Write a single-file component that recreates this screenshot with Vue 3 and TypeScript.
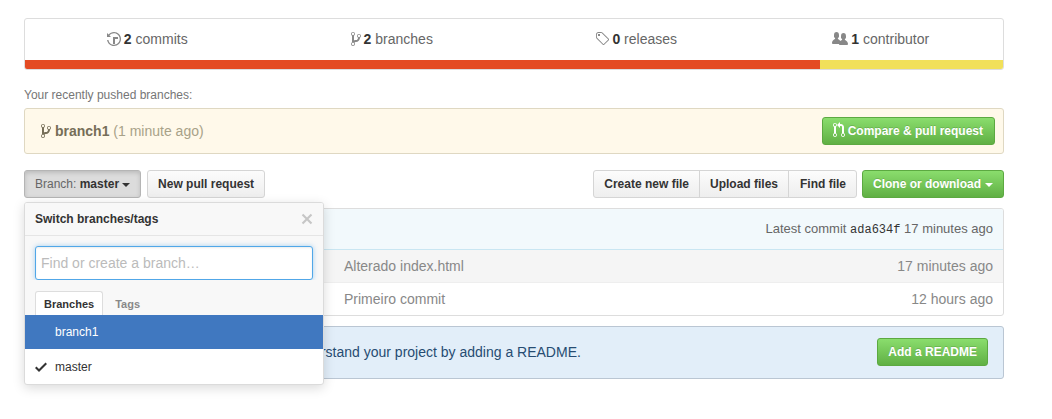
<script setup lang="ts">
const stats = [
  { icon: "history", w: 14, num: "2", label: "commits" },
  { icon: "branch", w: 10, num: "2", label: "branches" },
  { icon: "tag", w: 14, num: "0", label: "releases" },
  { icon: "org", w: 16, num: "1", label: "contributor" },
];

const paths: Record<string, string> = {
  history:
    "M8 13H6V6h5v2H8v5zM7 1C4.81 1 2.87 2.02 1.59 3.59L0 2v4h4L2.5 4.5C3.55 3.17 5.17 2.3 7 2.3c3.14 0 5.7 2.56 5.7 5.7s-2.56 5.7-5.7 5.7A5.71 5.71 0 0 1 1.4 9H.08c.48 3.4 3.42 6 6.92 6 3.86 0 7-3.14 7-7s-3.14-7-7-7z",
  branch:
    "M10 5c0-1.11-.89-2-2-2a1.993 1.993 0 0 0-1 3.72v.3c-.02.52-.23.98-.63 1.38-.4.4-.86.61-1.38.63-.83.02-1.48.16-2 .45V4.72a1.993 1.993 0 0 0-1-3.72C.88 1 0 1.89 0 3a2 2 0 0 0 1 1.72v6.56c-.59.35-1 .99-1 1.72 0 1.11.89 2 2 2 1.11 0 2-.89 2-2 0-.53-.2-1-.53-1.36.09-.06.48-.41.59-.47.25-.11.56-.17.94-.17 1.05-.05 1.95-.45 2.75-1.25S8.95 7.77 9 6.73h-.02C9.59 6.37 10 5.73 10 5zM2 1.8c.66 0 1.2.55 1.2 1.2 0 .65-.55 1.2-1.2 1.2C1.35 4.2.8 3.65.8 3c0-.65.55-1.2 1.2-1.2zm0 12.41c-.66 0-1.2-.55-1.2-1.2 0-.65.55-1.2 1.2-1.2.65 0 1.2.55 1.2 1.2 0 .65-.55 1.2-1.2 1.2zm6-8c-.66 0-1.2-.55-1.2-1.2 0-.65.55-1.2 1.2-1.2.65 0 1.2.55 1.2 1.2 0 .65-.55 1.2-1.2 1.2z",
  tag:
    "M7.73 1.73C7.26 1.26 6.62 1 5.96 1H3.5C2.13 1 1 2.13 1 3.5v2.47c0 .66.27 1.3.73 1.77l6.06 6.06c.39.39 1.02.39 1.41 0l4.59-4.59a.996.996 0 0 0 0-1.41L7.73 1.73zM2.38 7.09c-.31-.3-.47-.7-.47-1.13V3.5c0-.88.72-1.59 1.59-1.59h2.47c.42 0 .83.16 1.13.47l6.14 6.13-4.73 4.73-6.13-6.15zM3.01 3h2v2H3V3h.01z",
  org:
    "M16 12.999c0 .439-.45 1-1 1H7.995c-.539 0-.994-.447-.995-.999H1c-.54 0-1-.561-1-1 0-2.634 3-4 3-4s.229-.409 0-1c-.841-.621-1.058-.59-1-3 .058-2.419 1.367-3 2.5-3s2.442.58 2.5 3c.058 2.41-.159 2.379-1 3-.229.59 0 1 0 1s1.549.711 2.42 2.088C9.196 9.369 10 8.999 10 8.999s.229-.409 0-1c-.841-.62-1.058-.59-1-3 .058-2.419 1.367-3 2.5-3s2.437.581 2.495 3c.059 2.41-.158 2.38-1 3-.229.59 0 1 0 1s3.005 1.366 3.005 4",
  pull:
    "M11 11.28V5c-.03-.78-.34-1.47-.94-2.06C9.46 2.35 8.78 2.03 8 2H7V0L4 3l3 3V4h1c.27.02.48.11.69.31.21.2.3.42.31.69v6.28A1.993 1.993 0 0 0 10 15a1.993 1.993 0 0 0 1-3.72zm-1 2.92c-.66 0-1.2-.55-1.2-1.2 0-.65.55-1.2 1.2-1.2.65 0 1.2.55 1.2 1.2 0 .65-.55 1.2-1.2 1.2zM4 3c0-1.11-.89-2-2-2a1.993 1.993 0 0 0-1 3.72v6.56A1.993 1.993 0 0 0 2 15a1.993 1.993 0 0 0 1-3.72V4.72c.59-.34 1-.98 1-1.72zm-.8 10c0 .66-.55 1.2-1.2 1.2-.65 0-1.2-.55-1.2-1.2 0-.65.55-1.2 1.2-1.2.65 0 1.2.55 1.2 1.2zM2 4.2C1.34 4.2.8 3.65.8 3c0-.65.55-1.2 1.2-1.2.65 0 1.2.55 1.2 1.2 0 .65-.55 1.2-1.2 1.2z",
  check: "M12 5l-8 8-4-4 1.5-1.5L4 10l6.5-6.5L12 5z",
  x: "M7.48 8l3.75 3.75-1.48 1.48L6 9.48l-3.75 3.75-1.48-1.48L4.52 8 .77 4.25l1.48-1.48L6 6.52l3.75-3.75 1.48 1.48L7.48 8z",
};

const rows = [
  { message: "Alterado index.html", age: "17 minutes ago" },
  { message: "Primeiro commit", age: "12 hours ago" },
];
</script>

<template>
  <div class="page">
    <section class="summary">
      <ul class="stats">
        <li v-for="s in stats" :key="s.label">
          <svg class="icon" :width="s.w" height="16" :viewBox="`0 0 ${s.w} 16`">
            <path :d="paths[s.icon]" />
          </svg>
          <b>{{ s.num }}</b> {{ s.label }}
        </li>
      </ul>
      <div class="lang-bar">
        <span class="lang-html" />
        <span class="lang-js" />
      </div>
    </section>

    <h3 class="recent-title">Your recently pushed branches:</h3>
    <div class="recent">
      <div class="recent-name">
        <svg class="icon" width="10" height="16" viewBox="0 0 10 16">
          <path :d="paths.branch" />
        </svg>
        <b>branch1</b> <span class="recent-age">(1 minute ago)</span>
      </div>
      <a class="btn primary compare">
        <svg class="icon" width="12" height="16" viewBox="0 0 12 16">
          <path :d="paths.pull" />
        </svg>
        Compare &amp; pull request
      </a>
    </div>

    <div class="toolbar">
      <div class="branch-select">
        <a class="btn pressed"><span class="muted">Branch:</span> master<i class="caret" /></a>
        <div class="menu">
          <header class="menu-head">
            <span>Switch branches/tags</span>
            <svg class="close" width="12" height="16" viewBox="0 0 12 16">
              <path :d="paths.x" />
            </svg>
          </header>
          <div class="menu-filter">
            <input class="filter-input" type="text" placeholder="Find or create a branch…" />
          </div>
          <div class="menu-tabs">
            <span class="tab active">Branches</span>
            <span class="tab">Tags</span>
          </div>
          <div class="menu-item selected"><span class="check-slot" />branch1</div>
          <div class="menu-item">
            <span class="check-slot">
              <svg width="12" height="16" viewBox="0 0 12 16"><path :d="paths.check" /></svg>
            </span>
            master
          </div>
        </div>
      </div>
      <a class="btn">New pull request</a>
      <div class="spacer" />
      <div class="group">
        <a class="btn">Create new file</a>
        <a class="btn">Upload files</a>
        <a class="btn">Find file</a>
      </div>
      <a class="btn primary">Clone or download<i class="caret" /></a>
    </div>

    <div class="files">
      <div class="tease">
        Latest commit <code>ada634f</code> 17 minutes ago
      </div>
      <div v-for="(r, i) in rows" :key="r.message" class="row" :class="{ shaded: i === 0 }">
        <span class="row-msg">{{ r.message }}</span>
        <span class="row-age">{{ r.age }}</span>
      </div>
    </div>

    <div class="readme">
      <span>Help people interested in this repository understand your project by adding a README.</span>
      <a class="btn primary">Add a README</a>
    </div>
  </div>
</template>

<style>
html,
body {
  margin: 0;
  background: #fff;
}
</style>

<style scoped>
.page {
  width: 980px;
  padding: 18px 24px 40px;
  font-family: "Liberation Sans", Arial, sans-serif;
  font-size: 14px;
  line-height: 21px;
  color: #333;
}

.icon {
  fill: currentColor;
  vertical-align: text-bottom;
}

.summary {
  border: 1px solid #ddd;
  border-radius: 3px;
  overflow: hidden;
}
.stats {
  display: grid;
  grid-template-columns: repeat(4, 1fr);
  margin: 0;
  padding: 10px 0;
  list-style: none;
  color: #666;
}
.stats li {
  text-align: center;
}
.stats .icon {
  margin-right: 3px;
  color: #888;
}
.stats b {
  color: #333;
}
.lang-bar {
  display: flex;
  height: 9px;
}
.lang-html {
  width: 81.3%;
  background: #e44b23;
}
.lang-js {
  flex: 1;
  background: #f1e05a;
}

.recent-title {
  margin: 16px 0 4px;
  font-size: 12px;
  line-height: 18px;
  font-weight: 400;
  color: #767676;
}
.recent {
  display: flex;
  align-items: center;
  justify-content: space-between;
  padding: 8px 8px 8px 16px;
  background: #fff9ea;
  border: 1px solid #dfd8c2;
  border-radius: 3px;
}
.recent-name {
  color: #766e58;
}
.recent-name .icon {
  margin-right: 4px;
}
.recent-age {
  color: #a8a288;
}

.btn {
  display: inline-block;
  box-sizing: border-box;
  height: 28px;
  padding: 3px 10px;
  font-size: 12px;
  font-weight: 700;
  line-height: 20px;
  color: #333;
  white-space: nowrap;
  background: linear-gradient(#fcfcfc, #eee);
  border: 1px solid #d5d5d5;
  border-radius: 3px;
}
.btn.primary {
  color: #fff;
  text-shadow: 0 -1px 0 rgba(0, 0, 0, 0.15);
  background: linear-gradient(#8add6d, #60b044);
  border-color: #5ca941;
}
.btn.compare {
  padding-right: 11px;
}
.btn.compare .icon {
  margin-right: -1px;
}
.btn.pressed {
  font-weight: 700;
  background: #dcdcdc;
  border-color: #b5b5b5;
  box-shadow: inset 0 2px 4px rgba(0, 0, 0, 0.15);
}
.muted {
  font-weight: 400;
  color: #666;
}
.caret {
  display: inline-block;
  margin-left: 3px;
  vertical-align: middle;
  border-top: 4px solid currentColor;
  border-left: 4px solid transparent;
  border-right: 4px solid transparent;
}
.primary .caret {
  margin-left: 4px;
}

.toolbar {
  display: flex;
  margin-top: 16px;
}
.branch-select {
  position: relative;
  margin-right: 6px;
}
.spacer {
  flex: 1;
}
.group {
  display: flex;
  margin-right: 5px;
}
.group .btn {
  border-radius: 0;
  margin-left: -1px;
}
.group .btn:first-child {
  border-radius: 3px 0 0 3px;
  margin-left: 0;
}
.group .btn:last-child {
  padding-left: 11px;
  border-radius: 0 3px 3px 0;
}

.menu {
  position: absolute;
  top: 32px;
  left: 0;
  z-index: 10;
  width: 300px;
  box-sizing: border-box;
  font-size: 12px;
  background: #fff;
  border: 1px solid #dbdbdb;
  border-radius: 3px;
  box-shadow: 0 3px 12px rgba(0, 0, 0, 0.15);
  overflow: hidden;
}
.menu-head {
  display: flex;
  align-items: center;
  justify-content: space-between;
  height: 32px;
  padding: 0 10px;
  font-weight: 700;
  background: #f8f8f8;
  border-bottom: 1px solid #e5e5e5;
}
.close {
  fill: #c6c6c6;
}
.menu-filter {
  padding: 10px 10px 0;
  background: #f8f8f8;
}
.filter-input {
  display: block;
  width: 100%;
  height: 34px;
  box-sizing: border-box;
  padding: 6px 5px;
  font-family: inherit;
  font-size: 14px;
  background: #fff;
  border: 1px solid #51a7e8;
  border-radius: 3px;
  outline: none;
  box-shadow: inset 0 1px 2px rgba(0, 0, 0, 0.075), 0 0 5px rgba(81, 167, 232, 0.5);
}
.filter-input::placeholder {
  color: #bbb;
}
.menu-tabs {
  display: flex;
  height: 24px;
  padding: 11px 10px 0;
  background: #f8f8f8;
}
.tab {
  padding: 2px 11px 0;
  font-size: 11px;
  font-weight: 700;
  color: #888;
  border: 1px solid transparent;
  border-bottom: 0;
}
.tab.active {
  padding: 2px 8px 0;
  color: #333;
  background: #fff;
  border-color: #ddd;
  border-radius: 3px 3px 0 0;
}
.menu-item {
  display: flex;
  align-items: center;
  box-sizing: border-box;
  height: 35px;
  padding: 1px 0 0 10px;
  color: #333;
}
.menu-item.selected {
  height: 34px;
  padding-top: 0;
  color: #fff;
  background: #4078c0;
}
.check-slot {
  display: flex;
  width: 20px;
}
.check-slot svg {
  fill: #333;
}

.files {
  margin-top: 10px;
  border: 1px solid #ddd;
  border-radius: 3px;
  overflow: hidden;
}
.tease {
  height: 40px;
  padding: 0 10px;
  font-size: 13px;
  line-height: 40px;
  text-align: right;
  color: #666;
  background: #f2f9fc;
}
.tease code {
  font-family: "Liberation Mono", monospace;
  font-size: 12px;
  color: #333;
}
.row {
  display: grid;
  grid-template-columns: 319px 1fr auto;
  height: 32px;
  padding-right: 10px;
  line-height: 32px;
  color: #888;
  border-top: 1px solid #eee;
}
.row.shaded {
  background: #f5f5f5;
  border-top-color: #c9e6f2;
}
.row-msg {
  grid-column: 2;
}

.readme {
  display: flex;
  align-items: center;
  justify-content: space-between;
  margin-top: 10px;
  padding: 11px 15px 12px;
  color: #264c72;
  background: #e2eef9;
  border: 1px solid #bac6d3;
  border-radius: 3px;
}
</style>
